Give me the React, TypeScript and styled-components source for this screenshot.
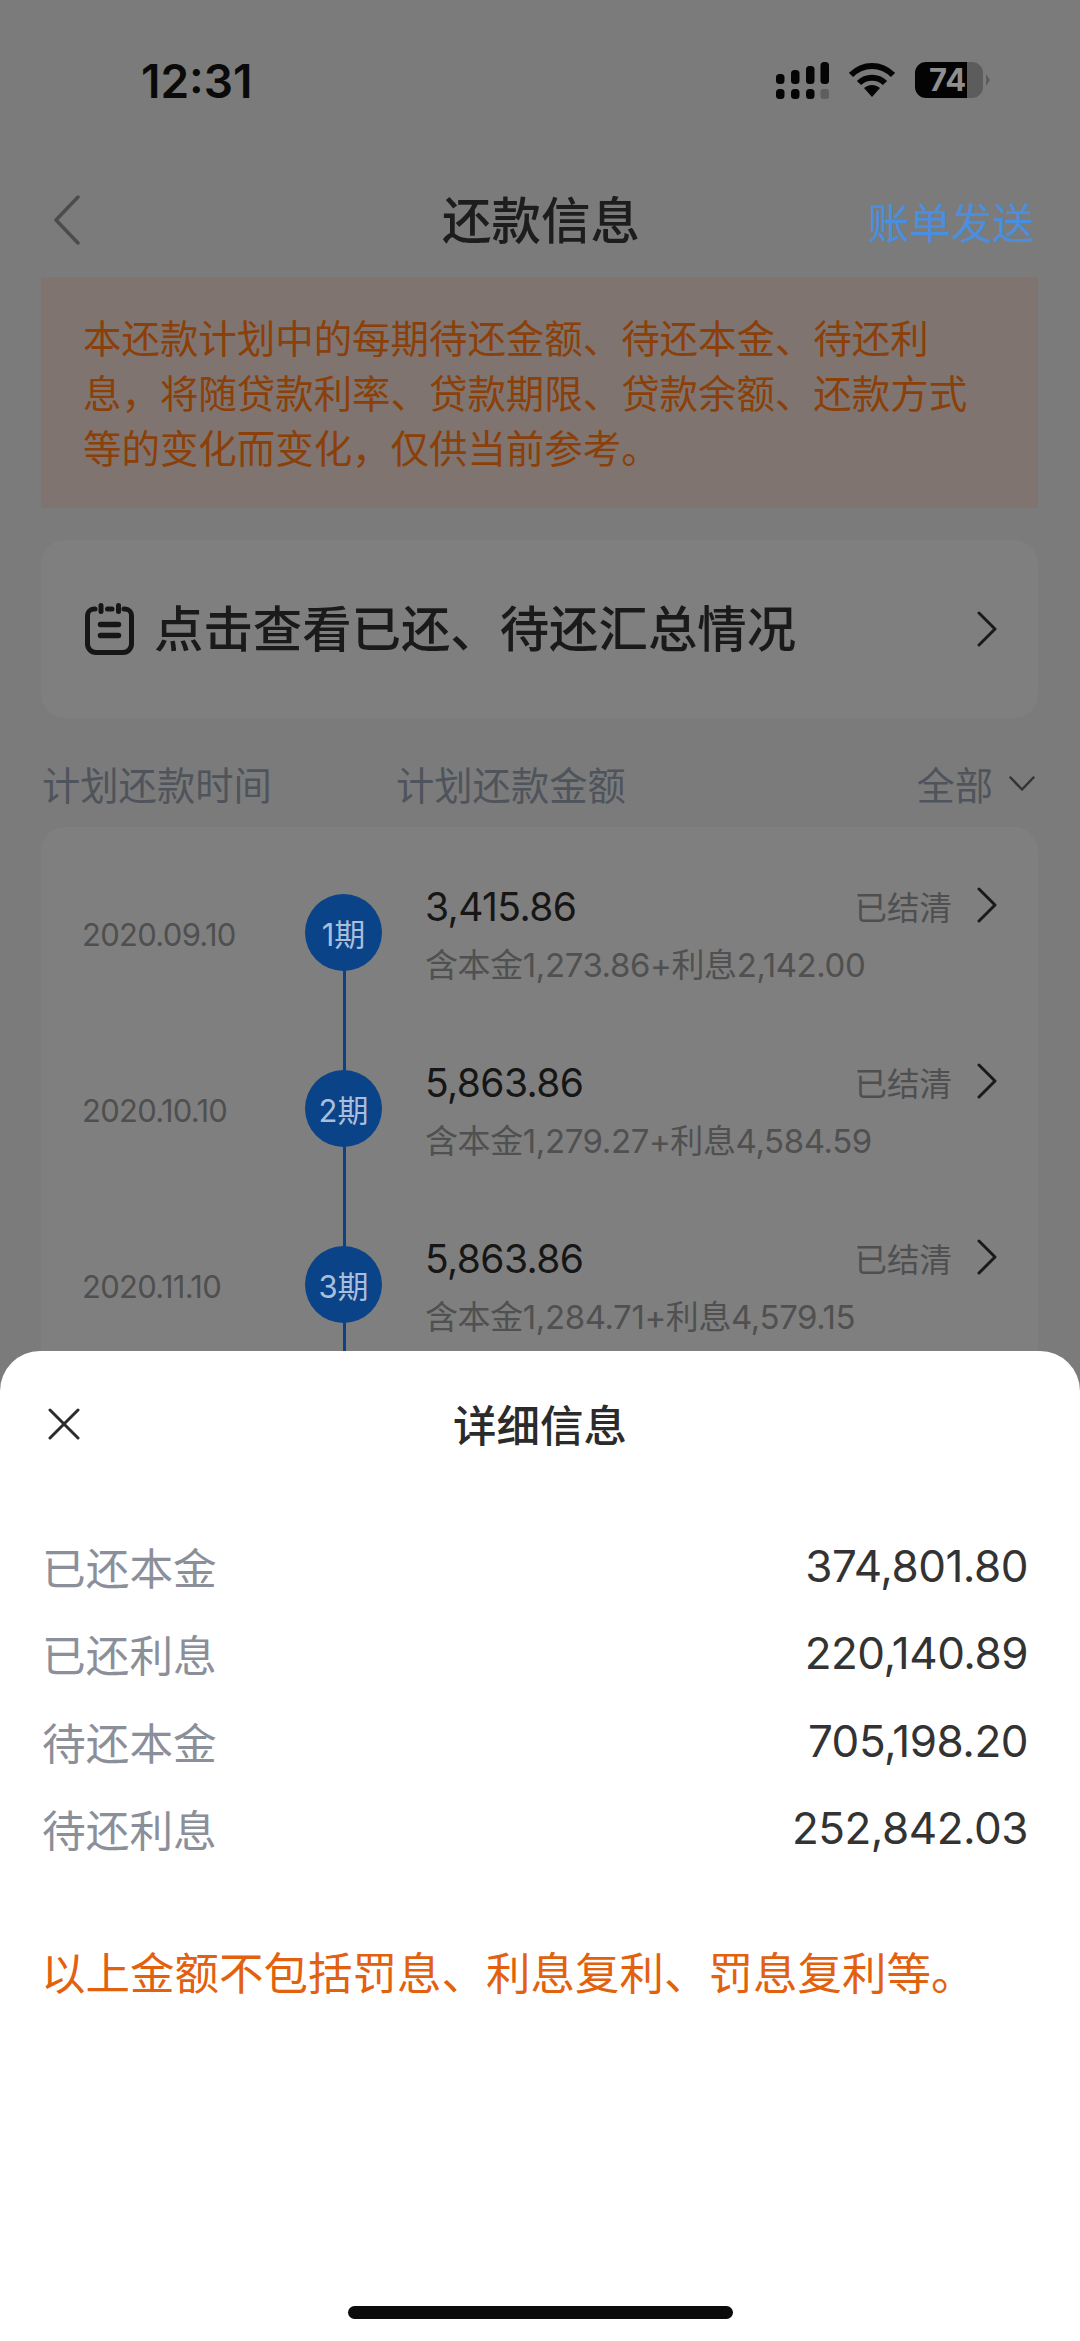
import React from "react";
import styled, { createGlobalStyle } from "styled-components";

const Global = createGlobalStyle`
  html, body { margin: 0; padding: 0; background: #7b7b7b; }
  #root { width: 1080px; height: 2341px; }
  * { box-sizing: border-box; }
`;

const SANS = `Inter, "Noto Sans CJK SC", "Noto Sans", sans-serif`;

const Screen = styled.div`
  position: relative;
  width: 1080px;
  height: 2341px;
  overflow: hidden;
  background: #7b7b7b;
  font-family: ${SANS};
  display: flex;
  flex-direction: column;
`;

const StatusBar = styled.div`
  height: 162px;
  padding: 53px 97px 0 141px;
  display: flex;
  justify-content: space-between;
  align-items: flex-start;
`;

const Clock = styled.div`
  font-size: 46px;
  line-height: 56px;
  font-weight: 600;
  color: #0a0a0a;
`;

const StatusIcons = styled.div`
  display: flex;
  align-items: flex-start;
  gap: 20px;
  padding-top: 9px;
`;

const NavBar = styled.div`
  height: 115px;
  padding: 0 46px 0 54px;
  display: flex;
  align-items: center;
  justify-content: space-between;
  position: relative;
`;

const NavTitle = styled.div`
  position: absolute;
  left: 442px;
  top: 29px;
  font-size: 49.5px;
  line-height: 60px;
  font-weight: 500;
  color: #1d1d1d;
`;

const NavAction = styled.div`
  font-size: 41.5px;
  line-height: 60px;
  padding-top: 9px;
  color: #4a8fdf;
`;

const Notice = styled.div`
  margin: 0 42px 0 41px;
  height: 231px;
  padding: 35px 40px 0 42px;
  background: #807470;
  font-size: 38.45px;
  line-height: 55px;
  color: #8a4008;
  white-space: nowrap;
`;

const SummaryCard = styled.div`
  margin: 32px 42px 0 41px;
  height: 178px;
  padding: 0 41px 0 44px;
  background: #7f7f7f;
  border-radius: 24px;
  display: flex;
  align-items: center;
`;

const SummaryText = styled.div`
  margin-left: 20px;
  flex: 1;
  font-size: 49.4px;
  line-height: 60px;
  font-weight: 500;
  color: #1a1a1a;
`;

const ColumnHead = styled.div`
  height: 109px;
  padding: 22px 45px 0 42px;
  display: flex;
  align-items: center;
  font-size: 38.3px;
  color: #4f545c;
`;

const HeadTime = styled.div`
  width: 354px;
`;

const HeadAmount = styled.div`
  flex: 1;
`;

const HeadFilter = styled.div`
  display: flex;
  align-items: center;
  gap: 16px;
`;

const ListCard = styled.div`
  margin: 0 42px 0 41px;
  flex: 1;
  padding-top: 17px;
  background: #7f7f7f;
  border-radius: 24px 24px 0 0;
`;

const PlanRow = styled.div`
  height: 176px;
  padding-left: 41px;
  display: flex;
  align-items: center;
`;

const PlanDate = styled.div`
  width: 223px;
  padding-top: 4px;
  font-size: 31px;
  letter-spacing: -0.7px;
  color: #4f4f4f;
`;

const Rail = styled.div<{ $first?: boolean }>`
  width: 77px;
  align-self: stretch;
  display: flex;
  align-items: center;
  justify-content: center;
  position: relative;
  &::before {
    content: "";
    position: absolute;
    left: 38px;
    top: ${(p) => (p.$first ? "88px" : "0")};
    bottom: 0;
    width: 3px;
    background: #0a4388;
  }
`;

const Badge = styled.div`
  position: relative;
  width: 77px;
  height: 77px;
  border-radius: 50%;
  background: #0a4388;
  color: #a9bedb;
  font-size: 31px;
  display: flex;
  align-items: center;
  justify-content: center;
`;

const PlanBody = styled.div`
  margin-left: 43px;
  width: 388px;
  padding-top: 4px;
  display: flex;
  flex-direction: column;
  gap: 12px;
`;

const PlanAmount = styled.div`
  font-size: 39px;
  line-height: 50px;
  letter-spacing: -0.6px;
  color: #161616;
  white-space: nowrap;
`;

const PlanDetail = styled.div`
  font-size: 33px;
  line-height: 42px;
  letter-spacing: -0.4px;
  color: #505050;
  white-space: nowrap;
`;

const PlanState = styled.div`
  flex: 1;
  display: flex;
  justify-content: flex-end;
  align-items: center;
  gap: 25px;
  padding: 0 41px 54px 0;
  font-size: 32.5px;
  color: #4f4f4f;
`;

const Sheet = styled.div`
  position: absolute;
  left: 0;
  right: 0;
  top: 1351px;
  bottom: 0;
  background: #fff;
  border-radius: 40px 40px 0 0;
  display: flex;
  flex-direction: column;
`;

const SheetHead = styled.div`
  position: relative;
  height: 144px;
  display: flex;
  align-items: center;
  justify-content: center;
`;

const CloseButton = styled.div`
  position: absolute;
  left: 48px;
  top: 57px;
  display: flex;
`;

const SheetTitle = styled.div`
  font-size: 43.5px;
  font-weight: 500;
  color: #2b2b2b;
`;

const Rows = styled.div`
  padding: 27px 52px 0 42px;
  display: flex;
  flex-direction: column;
`;

const InfoRow = styled.div`
  height: 87.5px;
  display: flex;
  align-items: center;
  justify-content: space-between;
`;

const InfoLabel = styled.div`
  font-size: 43.7px;
  color: #8b8f99;
`;

const InfoValue = styled.div`
  font-size: 44px;
  letter-spacing: -0.5px;
  color: #333;
`;

const Warning = styled.div`
  margin: 72px 0 0 41px;
  font-size: 44.5px;
  line-height: 60px;
  color: #e2610f;
  white-space: nowrap;
`;

const HomeBar = styled.div`
  position: absolute;
  left: 348px;
  bottom: 22px;
  width: 385px;
  height: 13px;
  border-radius: 7px;
  background: #0b0b0b;
`;

const Chevron = ({ w = 20, h = 36, c = "#1a1a1a", sw = 3 }: { w?: number; h?: number; c?: string; sw?: number }) => (
  <svg width={w} height={h} viewBox={`0 0 ${w} ${h}`} fill="none" stroke={c} strokeWidth={sw} strokeLinecap="round" strokeLinejoin="round">
    <path d={`M2 2 L${w - 2} ${h / 2} L2 ${h - 2}`} />
  </svg>
);

const Signal = () => (
  <svg width="53" height="37" viewBox="0 0 53 37" fill="#050505">
    <rect x="0" y="12" width="8.5" height="10" rx="3.5" />
    <rect x="15" y="8" width="8.5" height="14" rx="3.5" />
    <rect x="30" y="4" width="8.5" height="18" rx="3.5" />
    <rect x="44.5" y="0" width="8.5" height="22" rx="3.5" />
    <rect x="0" y="27" width="8.5" height="10" rx="3.5" />
    <rect x="15" y="27" width="8.5" height="10" rx="3.5" />
    <rect x="30" y="27" width="8.5" height="10" rx="3.5" />
    <rect x="44.5" y="27" width="8.5" height="10" rx="3" fill="#5e5e5e" />
  </svg>
);

const Wifi = () => (
  <svg width="46" height="35" viewBox="0 0 46 35" fill="none" stroke="#050505" strokeWidth="6">
    <path d="M2 13 C14 1 32 1 44 13" />
    <path d="M10 21 C17 14 29 14 36 21" />
    <path d="M15 26 L23 35 L31 26 C26 22 20 22 15 26 Z" fill="#050505" stroke="none" />
  </svg>
);

const BatteryShell = styled.div`
  position: relative;
  width: 68px;
  height: 36px;
  border-radius: 11px;
  background: linear-gradient(90deg, #030303 0 76%, #5c5c5c 76% 100%);
  color: #8f8f8f;
  font-size: 31px;
  font-weight: 700;
  line-height: 36px;
  padding-left: 14px;
  &::after {
    content: "";
    position: absolute;
    left: 71px;
    top: 12px;
    border-left: 4px solid #5c5c5c;
    border-top: 6px solid transparent;
    border-bottom: 6px solid transparent;
  }
`;

const Notepad = () => (
  <svg width="49" height="52" viewBox="0 0 49 52" fill="none" stroke="#161616" strokeWidth="5" strokeLinecap="round">
    <path d="M10 6 H9 A6.5 6.5 0 0 0 2.5 12.5 V41 A8.5 8.5 0 0 0 11 49.5 H38 A8.5 8.5 0 0 0 46.5 41 V12.5 A6.5 6.5 0 0 0 40 6 H39" />
    <path d="M16 2.5 V8.5 M33.5 2.5 V8.5 M22.5 6 H27" />
    <path d="M15.5 21.5 H33.5 M15.5 32.5 H33.5" strokeWidth="5.5" />
  </svg>
);

const plans = [
  { date: "2020.09.10", n: "1期", amount: "3,415.86", detail: "含本金1,273.86+利息2,142.00" },
  { date: "2020.10.10", n: "2期", amount: "5,863.86", detail: "含本金1,279.27+利息4,584.59" },
  { date: "2020.11.10", n: "3期", amount: "5,863.86", detail: "含本金1,284.71+利息4,579.15" },
];

const infos = [
  ["已还本金", "374,801.80"],
  ["已还利息", "220,140.89"],
  ["待还本金", "705,198.20"],
  ["待还利息", "252,842.03"],
];

export default function App() {
  return (
    <Screen>
      <Global />
      <StatusBar>
        <Clock>12:31</Clock>
        <StatusIcons>
          <Signal />
          <Wifi />
          <BatteryShell>74</BatteryShell>
        </StatusIcons>
      </StatusBar>
      <NavBar>
        <svg width="26" height="50" viewBox="0 0 26 50" fill="none" stroke="#4c4c4c" strokeWidth="3.5" strokeLinecap="round" strokeLinejoin="round">
          <path d="M24 2 L2 25 L24 48" />
        </svg>
        <NavTitle>还款信息</NavTitle>
        <NavAction>账单发送</NavAction>
      </NavBar>
      <Notice>
        本还款计划中的每期待还金额、待还本金、待还利
        <br />
        息，将随贷款利率、贷款期限、贷款余额、还款方式
        <br />
        等的变化而变化，仅供当前参考。
      </Notice>
      <SummaryCard>
        <Notepad />
        <SummaryText>点击查看已还、待还汇总情况</SummaryText>
        <Chevron />
      </SummaryCard>
      <ColumnHead>
        <HeadTime>计划还款时间</HeadTime>
        <HeadAmount>计划还款金额</HeadAmount>
        <HeadFilter>
          全部
          <svg width="26" height="15" viewBox="0 0 26 15" fill="none" stroke="#2f333a" strokeWidth="2.5" strokeLinecap="round" strokeLinejoin="round">
            <path d="M1.5 1.5 L13 13.5 L24.5 1.5" />
          </svg>
        </HeadFilter>
      </ColumnHead>
      <ListCard>
        {plans.map((p, i) => (
          <PlanRow key={p.n}>
            <PlanDate>{p.date}</PlanDate>
            <Rail $first={i === 0}>
              <Badge>{p.n}</Badge>
            </Rail>
            <PlanBody>
              <PlanAmount>{p.amount}</PlanAmount>
              <PlanDetail>{p.detail}</PlanDetail>
            </PlanBody>
            <PlanState>
              已结清
              <Chevron />
            </PlanState>
          </PlanRow>
        ))}
      </ListCard>
      <Sheet>
        <SheetHead>
          <CloseButton>
            <svg width="32" height="32" viewBox="0 0 32 32" stroke="#2b2b2b" strokeWidth="3" strokeLinecap="round">
              <path d="M2 2 L30 30 M30 2 L2 30" />
            </svg>
          </CloseButton>
          <SheetTitle>详细信息</SheetTitle>
        </SheetHead>
        <Rows>
          {infos.map(([label, value]) => (
            <InfoRow key={label}>
              <InfoLabel>{label}</InfoLabel>
              <InfoValue>{value}</InfoValue>
            </InfoRow>
          ))}
        </Rows>
        <Warning>以上金额不包括罚息、利息复利、罚息复利等。</Warning>
      </Sheet>
      <HomeBar />
    </Screen>
  );
}
